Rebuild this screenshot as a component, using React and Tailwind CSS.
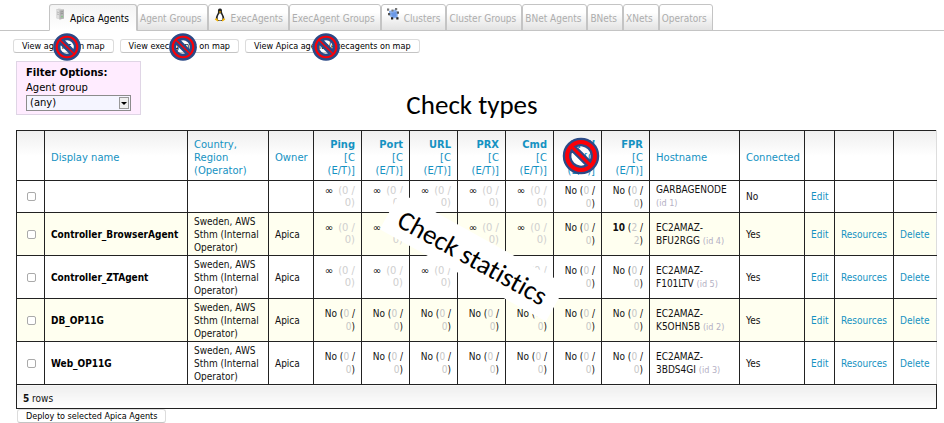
import React from "react";

const BODY = "font-['DejaVu_Sans_Condensed','DejaVu_Sans',Verdana,sans-serif]";

function NoSign({ className, outline = 2.4 }) {
  return (
    <svg viewBox="0 0 40 40" className={className} aria-hidden="true">
      <path
        fillRule="evenodd"
        fill="#fb0007"
        stroke="#2c4a87"
        strokeWidth={outline}
        d="M20 2a18 18 0 1 0 0 36a18 18 0 1 0 0-36ZM14.2 10.2L29.8 25.8A11.400 11.400 0 0 0 14.2 10.200ZM10.200 14.2A11.400 11.400 0 0 0 25.800 29.800Z"
      />
    </svg>
  );
}

function ServerIcon() {
  return (
    <svg viewBox="0 0 10 12" className="h-3 w-[10px]" aria-hidden="true">
      <path d="M1 1.500L4 .5L9 1.500V10.500L5 11.500L1 10Z" fill="#cfcfcf" />
      <path d="M1 1.500L4.500 2.500V11.300L1 10Z" fill="#dedede" />
      <path d="M4.500 2.500L9 1.500V10.500L4.500 11.500Z" fill="#b4b4b4" />
      <path d="M2 4L3.800 4.500M2 6L3.800 6.500" stroke="#a0a0a0" strokeWidth=".7" />
      <path d="M5.500 4L8 3.500M5.500 5.800L8 5.300" stroke="#8c8c8c" strokeWidth=".7" />
      <circle cx="7" cy="8.600" r=".9" fill="#7fc77f" />
    </svg>
  );
}

function PenguinIcon() {
  return (
    <svg viewBox="0 0 12 14" className="h-[14px] w-3" aria-hidden="true">
      <path d="M6 .5C4 .5 3.800 2 4 4.200C4 5.500 1.500 8 1.800 11L4 13H8.500L10.300 11C10.500 8 8 5.500 8 4C8.100 2 8 .5 6 .5Z" fill="#222" />
      <path d="M6 5C4.700 6 3.300 8.500 3.700 11.500C5 12.700 7.200 12.700 8.400 11.500C8.800 8.500 7.300 6 6 5Z" fill="#fff" />
      <path d="M4.700 3.800L6 3.200L7.400 3.800L6 5Z" fill="#f5b400" />
      <path d="M.7 11.500L2.400 10L4.600 12.500L3.800 13.600Z" fill="#f5b400" />
      <path d="M11.300 11.500L9.600 10L7.700 12.500L8.300 13.600Z" fill="#f5b400" />
    </svg>
  );
}

function ClusterIcon() {
  return (
    <svg viewBox="0 0 12 12" className="h-3 w-3" aria-hidden="true">
      <path d="M2 3L8 1.500L11 4L10.500 10L5 10.500L2 7Z" fill="#8ab0ee" />
      <path d="M4 5L9 4L9.500 8.500L5.500 9Z" fill="#6a98e6" />
      <path d="M0 .5h2.200v2.200H0ZM4.500 1.500h2v2h-2ZM8 0h2.200v2.200H8Z" fill="#777" />
      <path d="M1 5h2.200v2.200H1ZM9.800 3.500H12v2.200H9.800Z" fill="#555" />
      <path d="M4 9.300h2.200v2.200H4ZM9.300 9.300h2.200v2.200H9.300Z" fill="#222" />
    </svg>
  );
}

const tabs = [
  { label: "Apica Agents", icon: <ServerIcon />, active: true },
  { label: "Agent Groups" },
  { label: "ExecAgents", icon: <PenguinIcon /> },
  { label: "ExecAgent Groups" },
  { label: "Clusters", icon: <ClusterIcon /> },
  { label: "Cluster Groups" },
  { label: "BNet Agents" },
  { label: "BNets" },
  { label: "XNets" },
  { label: "Operators" },
];

function Tab({ label, icon, active }) {
  const look = active
    ? "border-b-white bg-gradient-to-b from-[#f4f4f4] to-white pr-[7px] text-black"
    : "border-b-[#c4c4c4] bg-gradient-to-b from-white from-30% to-[#e2e2e2] pr-[5px] text-[#adadad]";
  return (
    <a
      href="#"
      className={`-mb-px flex h-[27px] shrink-0 items-center rounded-t-[3px] border border-[#c4c4c4] pt-px ${icon ? "pl-[5px]" : "pl-[2px]"} ${look}`}
    >
      {icon && <span className="mr-[5px] self-start pt-[2px]">{icon}</span>}
      {label}
    </a>
  );
}

function PushButton({ children }) {
  return (
    <button
      type="button"
      className="h-[14px] rounded-[3px] border border-[#dcdcdc] border-b-[#c4c4c4] bg-white px-2 text-[9px] leading-3 whitespace-nowrap text-black"
    >
      {children}
    </button>
  );
}

const mapButtons = [
  { label: "View agents on map", sign: "left-[40px]" },
  { label: "View execagents on map", sign: "left-[49px]" },
  { label: "View Apica agents/execagents on map", sign: "left-[67px]" },
];

const checks = ["Ping", "Port", "URL", "PRX", "Cmd", "FFW", "FPR"];

const place = "Sweden, AWS Sthm (Internal Operator)";
const rows = [
  { name: "", place: "", owner: "", open: true, host: "GARBAGENODE", id: 1, connected: "No" },
  { name: "Controller_BrowserAgent", place, owner: "Apica", open: true, fpr: ["10", 2], host: "EC2AMAZ-BFU2RGG", id: 4, connected: "Yes" },
  { name: "Controller_ZTAgent", place, owner: "Apica", open: true, host: "EC2AMAZ-F101LTV", id: 5, connected: "Yes" },
  { name: "DB_OP11G", place, owner: "Apica", host: "EC2AMAZ-K5OHN5B", id: 2, connected: "Yes" },
  { name: "Web_OP11G", place, owner: "Apica", host: "EC2AMAZ-3BDS4GI", id: 3, connected: "Yes" },
];

const cell = "border border-[#222] px-[6px]";

function Stat({ row, index }) {
  if (row.open && index < 5) {
    return (
      <td className={`${cell} text-right font-['DejaVu_Sans',sans-serif] leading-3 whitespace-nowrap text-[#cfcfcf]`}>
        <span className="mr-0.5 text-black">∞</span> (0 /<br />0)
      </td>
    );
  }
  const [head, n] = (index === 6 && row.fpr) || ["No", 0];
  return (
    <td className={`${cell} text-right whitespace-nowrap`}>
      {head === "No" ? head : <b>{head}</b>} (<span className="text-[#c6c6c6]">{n}</span> /<br />
      <span className="text-[#c6c6c6]">{n}</span>)
    </td>
  );
}

export default function App() {
  return (
    <main className={`${BODY} min-h-screen bg-white text-[10px] leading-[13px] text-[#111]`}>
      <nav className="flex border-b border-[#c4c4c4] pt-1 pl-[49px]">
        {tabs.map((t) => (
          <Tab key={t.label} {...t} />
        ))}
      </nav>

      <div className="flex gap-[6px] pt-2 pl-[13px]">
        {mapButtons.map((b) => (
          <div key={b.label} className="relative flex">
            <PushButton>{b.label}</PushButton>
            <NoSign outline={3.6} className={`absolute -top-[6px] size-[28px] ${b.sign}`} />
          </div>
        ))}
      </div>

      <div className="mt-2 flex items-start font-['DejaVu_Sans',Verdana,sans-serif]">
        <section className="ml-4 w-[125px] border border-[#dfd5e5] bg-[#ffecff] px-[9px] pt-1 pb-[3px] text-black">
          <h2 className="leading-[14px] font-bold">Filter Options:</h2>
          <label htmlFor="group" className="block leading-[15px]">Agent group</label>
          <div className="relative">
            <select id="group" className="block h-4 w-full appearance-none border border-[#8c8c8c] bg-[#f5f5ff] pl-[3px] text-[10px] leading-3">
              <option>(any)</option>
            </select>
            <span className="pointer-events-none absolute top-[2px] right-[2px] flex h-3 w-[10px] items-center justify-center border border-[#999] bg-[#f0f0f0]">
              <span className="border-x-[3px] border-t-[3px] border-x-transparent border-t-black" />
            </span>
          </div>
        </section>
        <h1 className="flex-1 pt-8 pr-[141px] text-center font-['Carlito','Lato',sans-serif] text-[27px] leading-6 text-black">
          Check types
        </h1>
      </div>

      <div className="relative mt-[13px] mr-[7px] ml-4">
        <table className="w-full table-fixed border-collapse">
          <colgroup>
            <col className="w-[28px]" />
            <col />
            <col className="w-[81px]" />
            <col className="w-[45px]" />
            {checks.map((c) => (
              <col key={c} className="w-[48px]" />
            ))}
            <col className="w-[90px]" />
            <col className="w-[65px]" />
            <col className="w-[30px]" />
            <col className="w-[59px]" />
            <col className="w-[43px]" />
          </colgroup>
          <thead className="text-left font-['DejaVu_Sans',Verdana,sans-serif] text-[#1592c2]">
            <tr className="h-[50px] bg-gradient-to-b from-[#efefef] to-white to-50% *:pt-1 *:font-normal">
              <th className={cell} />
              <th className={cell}>Display name</th>
              <th className={cell}>Country, Region (Operator)</th>
              <th className={cell}>Owner</th>
              {checks.map((c) => (
                <th key={c} className={`${cell} text-right whitespace-nowrap`}>
                  <div className={c === "FFW" ? "relative" : undefined}>
                    <b className={`${BODY} text-[11px]`}>{c}</b>
                    <br />[C<br />(E/T)]
                    {c === "FFW" && <NoSign className="absolute -top-px left-[2px] size-[38px]" />}
                  </div>
                </th>
              ))}
              <th className={cell}>Hostname</th>
              <th className={cell}>Connected</th>
              <th className={cell} />
              <th className={cell} />
              <th className={`${cell} border-r-[#ddd]`} />
            </tr>
          </thead>
          <tbody>
            {rows.map((r) => (
              <tr key={r.id} className={`even:bg-[#fffff0] ${r.name ? "h-[43px]" : "h-8"}`}>
                <td className={cell}>
                  <input
                    type="checkbox"
                    aria-label={r.name || r.host}
                    className="ml-1 block size-[9px] appearance-none rounded-[2px] border border-[#aaa] bg-white"
                  />
                </td>
                <td className={`${cell} font-bold text-black`}>{r.name}</td>
                <td className={cell}>{r.place}</td>
                <td className={cell}>{r.owner}</td>
                {checks.map((c, i) => (
                  <Stat key={c} row={r} index={i} />
                ))}
                <td className={cell}>
                  {r.host} <span className="text-[9px] whitespace-nowrap text-[#b4b0c4]">(id {r.id})</span>
                </td>
                <td className={cell}>{r.connected}</td>
                <td className={`${cell} text-[#1592c2]`}><a href="#">Edit</a></td>
                <td className={`${cell} text-[#1592c2]`}>{r.name && <a href="#">Resources</a>}</td>
                <td className={`${cell} border-r-[#ddd] text-[#1592c2]`}>{r.name && <a href="#">Delete</a>}</td>
              </tr>
            ))}
          </tbody>
          <tfoot>
            <tr className="h-6">
              <td colSpan={16} className={`${cell} bg-gradient-to-b from-[#eeeeee] to-white pt-1`}>
                <b>5</b> rows
              </td>
            </tr>
          </tfoot>
        </table>
        <div className="absolute top-[106px] left-[362px] flex h-[42px] w-[190px] rotate-[29deg] items-center justify-center bg-white font-['Carlito','Lato',sans-serif] text-[27px] whitespace-nowrap text-black [font-variant-ligatures:none]">
          Check statistics
        </div>
      </div>
      <div className="flex pl-[17px]">
        <PushButton>Deploy to selected Apica Agents</PushButton>
      </div>
    </main>
  );
}
